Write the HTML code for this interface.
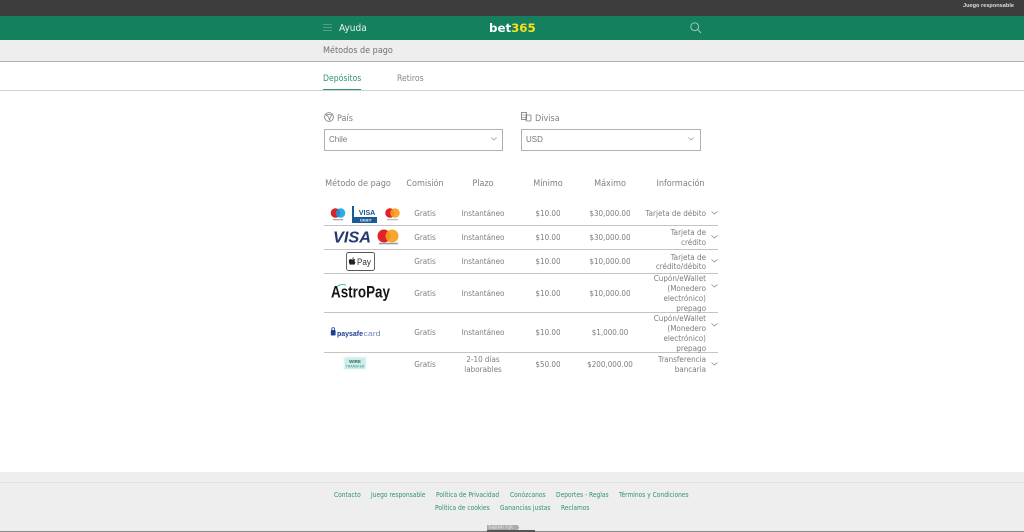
<!DOCTYPE html>
<html lang="es"><head><meta charset="utf-8"><title>Métodos de pago</title>
<style>
html,body{margin:0;padding:0;background:#fff}
body{width:1024px;height:532px;overflow:hidden;position:relative;font-family:"DejaVu Sans","Liberation Sans",sans-serif;font-stretch:condensed;color:#777}
.b{position:absolute}
.t{position:absolute;white-space:nowrap;font-size:8px;line-height:9.6px;color:#7d7d7d;font-stretch:condensed}
.c{text-align:center;width:100px;margin-left:-50px}
.r{text-align:right;width:90px;left:616px}
.h{font-size:9px;color:#808080;top:178.5px;line-height:11px}
.l{background:#c4c4c4;left:324px;width:394px;height:1px;position:absolute}
.f{font-size:6.6px;color:#2f9273;line-height:9px;top:491px}
svg{position:absolute;overflow:visible}
</style></head><body>
<div class="b" style="left:0;top:0;width:1024px;height:16px;background:#3d3d3d"></div>
<div class="t" style="left:963px;top:3px;font-size:5.6px;line-height:7px;color:#ddd;font-family:'Liberation Sans',sans-serif;font-weight:bold;">Juego responsable</div>
<div class="b" style="left:0;top:16px;width:1024px;height:24px;background:#14805e"></div>
<svg style="left:323px;top:24px" width="9" height="8"><path d="M0 .5H9M0 3.5H9M0 6.5H9" stroke="#4f9f86" stroke-width="1"/></svg>
<div class="t" style="left:339px;top:22.5px;font-size:10px;line-height:12px;color:#e8f3ef">Ayuda</div>
<div class="t" style="left:489px;top:20.5px;font-size:11.8px;line-height:15px;font-weight:bold;font-stretch:normal;color:#fff">bet<span style="color:#ffdf1b">365</span></div>
<svg style="left:690px;top:22px" width="12" height="12"><circle cx="4.7" cy="4.7" r="3.9" fill="none" stroke="#a8d0c3" stroke-width=".9"/><path d="M7.6 7.6L11 11" stroke="#a8d0c3" stroke-width=".9"/></svg>
<div class="b" style="left:0;top:40px;width:1024px;height:21px;background:#eeeeee"></div>
<div class="b" style="left:0;top:61px;width:1024px;height:1px;background:#b0b0b0"></div>
<div class="t" style="left:323px;top:46px;font-size:9px;line-height:11px;color:#707070">Métodos de pago</div>
<div class="t" style="left:323px;top:74px;font-size:8.6px;line-height:11px;color:#2f9273">Depósitos</div>
<div class="t" style="left:397px;top:74px;font-size:8.6px;line-height:11px;color:#888">Retiros</div>
<div class="b" style="left:0;top:90px;width:1024px;height:1px;background:#d2d2d2"></div>
<div class="b" style="left:323px;top:88.5px;width:38px;height:1.5px;background:#2f9273"></div>
<svg style="left:324px;top:112px" width="10" height="10"><circle cx="5" cy="5" r="4.4" fill="none" stroke="#777" stroke-width=".8"/><path d="M2 3L5 2.5L8 3L6.5 5L5.5 8L4.5 5Z" fill="none" stroke="#777" stroke-width=".7"/></svg>
<div class="t" style="left:337px;top:114px;font-size:9px;line-height:11px;color:#808080">País</div>
<svg style="left:521px;top:112px" width="11" height="10"><rect x=".5" y=".5" width="5" height="7" fill="none" stroke="#777" stroke-width=".8"/><rect x="5" y="3" width="5" height="6" rx="1" fill="none" stroke="#777" stroke-width=".8"/><path d="M.5 3H5.5M.5 5.500H5" stroke="#777" stroke-width=".6"/></svg>
<div class="t" style="left:535px;top:114px;font-size:9px;line-height:11px;color:#808080">Divisa</div>
<div class="b" style="left:323.500px;top:129px;width:177.500px;height:19.500px;border:1px solid #b0b0b0"></div>
<div class="t" style="left:329px;top:135px;font-family:'Liberation Sans',sans-serif;font-size:8px;color:#777">Chile</div>
<svg style="left:491px;top:137px" width="6" height="4"><path d="M.3 .5L3 3L5.700 .5" fill="none" stroke="#999" stroke-width=".8"/></svg>
<div class="b" style="left:520.500px;top:129px;width:178px;height:19.500px;border:1px solid #b0b0b0"></div>
<div class="t" style="left:526px;top:135px;font-family:'Liberation Sans',sans-serif;font-size:8px;color:#777">USD</div>
<svg style="left:688px;top:137px" width="6" height="4"><path d="M.3 .5L3 3L5.700 .5" fill="none" stroke="#999" stroke-width=".8"/></svg>

<div class="t h c" style="left:358px">Método de pago</div>
<div class="t h c" style="left:425px">Comisión</div>
<div class="t h c" style="left:483px">Plazo</div>
<div class="t h c" style="left:548px">Mínimo</div>
<div class="t h c" style="left:610px">Máximo</div>
<div class="t h c" style="left:680.500px">Información</div>

<div class="l" style="top:225px"></div>
<div class="l" style="top:249px"></div>
<div class="l" style="top:273px"></div>
<div class="l" style="top:312px"></div>
<div class="l" style="top:352px"></div>

<!-- row 1 -->
<svg style="left:330px;top:206px" width="72" height="17">
<circle cx="5.500" cy="7" r="4.800" fill="#d9222a"/><circle cx="10.500" cy="7" r="4.800" fill="#0a9ee0" opacity=".85"/>
<rect x="3" y="13" width="10" height="1.300" fill="#aaa"/>
<path d="M22 0h2v11h23v6H22z" fill="#1a5a96"/>
<text x="36" y="9" font-family="Liberation Sans" font-size="7" font-weight="bold" fill="#1a4f8f" text-anchor="middle" dx="1">VISA</text>
<text x="36" y="15.500" font-family="Liberation Sans" font-size="4" font-weight="bold" fill="#dfe8f2" text-anchor="middle">DEBIT</text>
<circle cx="60" cy="7" r="4.800" fill="#e0222a"/><circle cx="65" cy="7" r="4.800" fill="#f79e1b" opacity=".9"/>
<rect x="57" y="13" width="11" height="1.300" fill="#bbb"/>
</svg>
<!-- row 2 -->
<svg style="left:332px;top:228px" width="70" height="18">
<text x="1" y="14.500" font-family="Liberation Sans" font-size="16" font-weight="bold" font-style="italic" fill="#25376f" textLength="38" lengthAdjust="spacingAndGlyphs">VISA</text>
<circle cx="52" cy="8" r="6.500" fill="#e0222a"/><circle cx="60" cy="8" r="6.500" fill="#f79e1b" opacity=".92"/>
<rect x="47" y="14.800" width="19" height="1.500" fill="#999"/>
</svg>
<!-- row 3 -->
<svg style="left:346px;top:252px" width="30" height="20">
<rect x=".5" y=".5" width="28" height="18" rx="2" fill="#fff" stroke="#555" stroke-width=".9"/>
<path transform="translate(-4.500 0)" d="M8.500 7c1 0 1.500.6 2.300.6.700 0 1.200-.6 2.100-.6l.8.500c-.8.600-.8 2.400.3 2.900-.4 1.200-1.100 2.400-2 2.400-.7 0-.8-.4-1.500-.4s-.9.4-1.500.4c-1.300 0-2.700-4.700-.5-5.800zM10.800 7c0-1 .7-1.700 1.500-1.800 0 1-.6 1.800-1.500 1.800z" fill="#222"/>
<text x="11" y="13" font-family="Liberation Sans" font-size="9" fill="#333" textLength="14" lengthAdjust="spacingAndGlyphs">Pay</text>
</svg>
<!-- row 4 -->
<svg style="left:330px;top:283px" width="62" height="20">
<text x="1" y="14.500" font-family="Liberation Sans" font-size="16.500" font-weight="bold" fill="#161616" textLength="59" lengthAdjust="spacingAndGlyphs">AstroPay</text>
<path d="M7 3.500Q11 .5 16 2" fill="none" stroke="#3fc3ad" stroke-width="1"/>
</svg>
<!-- row 5 -->
<svg style="left:330px;top:327px" width="54" height="12">
<rect x=".8" y="3" width="4.800" height="5.500" rx="1" fill="#1d3f8f"/><path d="M1.800 3.500V2a1.400 1.400 0 0 1 2.800 0V3.500" fill="none" stroke="#1d3f8f" stroke-width=".8"/>
<text x="7" y="8.800" font-family="Liberation Sans" font-size="7.500" font-weight="bold" fill="#1d3f8f" textLength="26" lengthAdjust="spacingAndGlyphs">paysafe</text>
<text x="33.500" y="8.800" font-family="Liberation Sans" font-size="7.500" fill="#6f8cc0" textLength="17" lengthAdjust="spacingAndGlyphs">card</text>
</svg>
<!-- row 6 -->
<svg style="left:343px;top:356px" width="24" height="15">
<rect x="0" y="0" width="24" height="14.500" fill="#f0fbfb"/><rect x="1.500" y="1.500" width="21" height="11.500" fill="#cfecec"/>
<text x="12" y="7" font-family="Liberation Sans" font-size="4.500" font-weight="bold" fill="#2a6a55" text-anchor="middle">WIRE</text>
<text x="12" y="11.500" font-family="Liberation Sans" font-size="3.500" fill="#3f8f78" text-anchor="middle">TRANSFER</text>
</svg>

<div class="t c" style="left:425px;top:209px">Gratis</div>
<div class="t c" style="left:483px;top:209px">Instantáneo</div>
<div class="t c" style="left:548px;top:209px">$10.00</div>
<div class="t c" style="left:610px;top:209px">$30,000.00</div>
<div class="t r" style="top:209px">Tarjeta de débito</div>

<div class="t c" style="left:425px;top:233px">Gratis</div>
<div class="t c" style="left:483px;top:233px">Instantáneo</div>
<div class="t c" style="left:548px;top:233px">$10.00</div>
<div class="t c" style="left:610px;top:233px">$30,000.00</div>
<div class="t r" style="top:228px">Tarjeta de<br>crédito</div>

<div class="t c" style="left:425px;top:257px">Gratis</div>
<div class="t c" style="left:483px;top:257px">Instantáneo</div>
<div class="t c" style="left:548px;top:257px">$10.00</div>
<div class="t c" style="left:610px;top:257px">$10,000.00</div>
<div class="t r" style="top:252.500px">Tarjeta de<br>crédito/débito</div>

<div class="t c" style="left:425px;top:289px">Gratis</div>
<div class="t c" style="left:483px;top:289px">Instantáneo</div>
<div class="t c" style="left:548px;top:289px">$10.00</div>
<div class="t c" style="left:610px;top:289px">$10,000.00</div>
<div class="t r" style="top:274px;line-height:10px">Cupón/eWallet<br>(Monedero<br>electrónico)<br>prepago</div>

<div class="t c" style="left:425px;top:328px">Gratis</div>
<div class="t c" style="left:483px;top:328px">Instantáneo</div>
<div class="t c" style="left:548px;top:328px">$10.00</div>
<div class="t c" style="left:610px;top:328px">$1,000.00</div>
<div class="t r" style="top:314px;line-height:10px">Cupón/eWallet<br>(Monedero<br>electrónico)<br>prepago</div>

<div class="t c" style="left:425px;top:360px">Gratis</div>
<div class="t c" style="left:483px;top:355px">2-10 días<br>laborables</div>
<div class="t c" style="left:548px;top:360px">$50.00</div>
<div class="t c" style="left:610px;top:360px">$200,000.00</div>
<div class="t r" style="top:355px">Transferencia<br>bancaria</div>

<svg style="left:711px;top:211px" width="7" height="4"><path d="M.5 .5L3.500 3L6.500 .5" fill="none" stroke="#888" stroke-width=".8"/></svg>
<svg style="left:711px;top:235px" width="7" height="4"><path d="M.5 .5L3.500 3L6.500 .5" fill="none" stroke="#888" stroke-width=".8"/></svg>
<svg style="left:711px;top:259px" width="7" height="4"><path d="M.5 .5L3.500 3L6.500 .5" fill="none" stroke="#888" stroke-width=".8"/></svg>
<svg style="left:711px;top:284px" width="7" height="4"><path d="M.5 .5L3.500 3L6.500 .5" fill="none" stroke="#888" stroke-width=".8"/></svg>
<svg style="left:711px;top:323px" width="7" height="4"><path d="M.5 .5L3.500 3L6.500 .5" fill="none" stroke="#888" stroke-width=".8"/></svg>
<svg style="left:711px;top:362px" width="7" height="4"><path d="M.5 .5L3.500 3L6.500 .5" fill="none" stroke="#888" stroke-width=".8"/></svg>

<div class="b" style="left:0;top:472px;width:1024px;height:59px;background:#eeeeee"></div>
<div class="b" style="left:0;top:482px;width:1024px;height:1px;background:#e2e2e2"></div>
<div class="t f" style="left:334px">Contacto</div>
<div class="t f" style="left:371px">Juego responsable</div>
<div class="t f" style="left:436px">Política de Privacidad</div>
<div class="t f" style="left:510px">Conózcanos</div>
<div class="t f" style="left:556px">Deportes - Reglas</div>
<div class="t f" style="left:619px">Términos y Condiciones</div>
<div class="t f" style="left:435px;top:504px">Política de cookies</div>
<div class="t f" style="left:500px;top:504px">Ganancias justas</div>
<div class="t f" style="left:561px;top:504px">Reclamos</div>
<div class="b" style="left:487px;top:525px;width:32px;height:5px;background:#aaa;border-radius:0 3px 3px 0"></div>
<div class="t" style="left:488px;top:525px;font-size:4px;line-height:5px;color:#eee">THERAPY FOR</div>
<div class="b" style="left:0;top:531px;width:1024px;height:1px;background:#8a8a8a"></div>
<div class="b" style="left:487px;top:530px;width:48px;height:2px;background:#555"></div>
</body></html>
